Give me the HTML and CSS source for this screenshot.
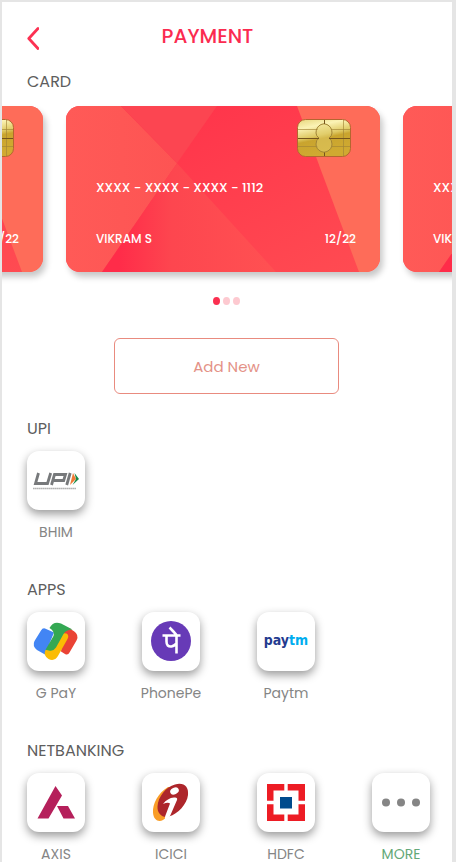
FILE: index.html
```html
<!DOCTYPE html>
<html lang="en">
<head>
<meta charset="utf-8">
<meta name="viewport" content="width=device-width, initial-scale=1">
<title>Payment</title>
<link rel="stylesheet" href="styles.css">
</head>
<body>
<svg class="defs" aria-hidden="true">
  <defs>
    <linearGradient id="g-left" x1="0" y1="0" x2="1" y2="0"><stop offset="0" stop-color="#ff5a57"/><stop offset="1" stop-color="#fd5453"/></linearGradient>
    <linearGradient id="g-bottom" x1="0" y1="0" x2="1" y2="0"><stop offset="0.1" stop-color="#ff2c49"/><stop offset="0.4" stop-color="#fd464f"/><stop offset="1" stop-color="#ff5152"/></linearGradient>
    <linearGradient id="g-right" x1="0" y1="0" x2="1" y2="1"><stop offset="0" stop-color="#ff2f49"/><stop offset="1" stop-color="#ff4c52"/></linearGradient>
    <linearGradient id="g-chip" x1="0" y1="0" x2="0.3" y2="1"><stop offset="0" stop-color="#e6d67c"/><stop offset="0.25" stop-color="#fbf3b5"/><stop offset="0.5" stop-color="#dfc964"/><stop offset="0.6" stop-color="#c9a42e"/><stop offset="1" stop-color="#d0aa31"/></linearGradient>
    <symbol id="card-art" viewBox="0 0 314 165" preserveAspectRatio="none">
      <rect width="314" height="165" fill="url(#g-right)"/>
      <path d="M0 0H55L111 57L36 165H0Z" fill="url(#g-left)"/>
      <path d="M55 0H151L111 57Z" fill="#fc4551"/>
      <path d="M111 57L210 165H36Z" fill="url(#g-bottom)"/>
      <path d="M231 0H314V165H293Z" fill="#fe6c59"/>
    </symbol>
    <symbol id="chip" viewBox="0 0 54 38">
      <rect x=".5" y=".5" width="53" height="37" rx="8" fill="url(#g-chip)" stroke="#b4662f"/>
      <g fill="none" stroke="#a18435" stroke-width="1">
        <path d="M1 10.500H21M34 10.500H53M1 27.500H21M34 27.500H53M46.500 1V37" opacity=".65"/>
        <path d="M24 5.500Q27 4 30 5.500Q35 8 35 14Q35 17 32 19Q35 21 35 25Q35 30 30 32.500Q27 34 24 32.500Q19 30 19 25Q19 21 22 19Q19 17 19 14Q19 8 24 5.500Z" fill="#e4d274" fill-opacity=".45"/>
      </g>
      <path d="M1 19.500H22M32 19.500H53M27.500 1V5M27.500 33.500V37" stroke="#75541c" fill="none"/>
    </symbol>
  </defs>
</svg>
<main class="screen">
  <header class="topbar">
    <button class="back" type="button" aria-label="Back">
      <svg viewBox="0 0 12 23" width="12" height="23"><path d="M11 1.500L1.800 11.500L11 21.500" fill="none" stroke="#fc3152" stroke-width="2.800" stroke-linecap="round" stroke-linejoin="round"/></svg>
    </button>
    <h1 class="title">PAYMENT</h1>
  </header>

  <section>
    <h2 class="heading">CARD</h2>
    <div class="carousel">
      <article class="card">
        <svg class="card-art"><use href="#card-art"/></svg>
        <svg class="chip"><use href="#chip"/></svg>
        <p class="number">XXXX - XXXX - XXXX - 1112</p>
        <p class="owner"><span>VIKRAM S</span><span>12/22</span></p>
      </article>
      <article class="card">
        <svg class="card-art"><use href="#card-art"/></svg>
        <svg class="chip"><use href="#chip"/></svg>
        <p class="number">XXXX - XXXX - XXXX - 1112</p>
        <p class="owner"><span>VIKRAM S</span><span>12/22</span></p>
      </article>
      <article class="card">
        <svg class="card-art"><use href="#card-art"/></svg>
        <svg class="chip"><use href="#chip"/></svg>
        <p class="number">XXXX - XXXX - XXXX - 1112</p>
        <p class="owner"><span>VIKRAM S</span><span>12/22</span></p>
      </article>
    </div>
    <div class="actions">
      <div class="dots"><span class="dot active"></span><span class="dot"></span><span class="dot"></span></div>
      <button class="add" type="button">Add New</button>
    </div>
  </section>

  <section class="group">
    <h2 class="heading">UPI</h2>
    <div class="options">
      <button class="option" type="button">
        <span class="tile"><svg viewBox="0 0 58 59">
          <g fill="none" stroke="#77797b" stroke-width="2.800" stroke-linejoin="miter">
            <path d="M11.500 22L8.500 32.500H20.500L23.700 22"/>
            <path d="M24.500 34L27.500 23.500H38.500L36.700 29.500H27"/>
            <path d="M43.200 22L39.700 34"/>
          </g>
          <path d="M46 22L49 28L43 34Z" fill="#f07a35"/><path d="M47.500 22L52 28L45.500 34L49 28Z" fill="#198a48"/>
          <path d="M6 37.500H49" stroke="#999" stroke-width="1.600" stroke-dasharray="1.700 .3" opacity=".75"/>
        </svg></span>
        <span class="label">BHIM</span>
      </button>
    </div>
  </section>

  <section class="group">
    <h2 class="heading">APPS</h2>
    <div class="options">
      <button class="option" type="button">
        <span class="tile"><svg viewBox="0 0 58 59">
          <path d="M36 18L43 16.800L47 19.200Q52.500 23 49.500 28.500L42.500 40.500Q41 43.500 38 42L34 39.500Z" fill="#ea4335"/>
          <path d="M18 16.500L27 20.500L18 42.500L10 38Q5 34 7.500 29L14 18.500Q15.500 15.800 18 16.500Z" fill="#4285f4"/>
          <path d="M39.500 21.500Q42.500 23.500 40.500 27L31.500 43Q28 50 21.500 47Q16 43.500 18.500 38L24 36L34 21Z" fill="#fbbc04"/>
          <path d="M22.500 16Q26.500 8.500 34 11.500L45.500 17.500Q39 17.500 36.500 22L29 35.500Q26 39.800 22 38.500L18.500 37.800L26.500 24Q28 19.500 22.500 16Z" fill="#34a853"/>
        </svg></span>
        <span class="label">G PaY</span>
      </button>
      <button class="option" type="button">
        <span class="tile"><svg viewBox="0 0 58 59">
          <circle cx="29" cy="29" r="20" fill="#673ab7"/>
          <path d="M20.500 23.500H38.500M24.500 23.500V29.500Q24.500 35 29.500 34.500Q32 34 34.500 31.500M34.500 41.500V23Q32 20 27.500 15.500" fill="none" stroke="#fff" stroke-width="2.600"/>
        </svg></span>
        <span class="label">PhonePe</span>
      </button>
      <button class="option" type="button">
        <span class="tile"><svg viewBox="0 0 58 59">
          <text class="paytm" x="29" y="33" text-anchor="middle"><tspan fill="#243b8f">pay</tspan><tspan fill="#00adef">tm</tspan></text>
        </svg></span>
        <span class="label">Paytm</span>
      </button>
    </div>
  </section>

  <section class="group">
    <h2 class="heading">NETBANKING</h2>
    <div class="options">
      <button class="option" type="button">
        <span class="tile"><svg viewBox="0 0 58 59">
          <path d="M28.500 13L35 22.500L21.500 45.500H10.500ZM30 33H41L48 45.500H36.500Z" fill="#b5205b"/>
        </svg></span>
        <span class="label">AXIS</span>
      </button>
      <button class="option" type="button">
        <span class="tile"><svg viewBox="0 0 58 59">
          <path d="M26 14C16 20 10.500 31 11 39.500C11.500 47 16.500 49.500 21 47C25 45 27.500 40 26 37L35 15Z" fill="#f99d27"/>
          <path d="M27 43.500C21 45.500 15 41 15.500 33.500C16 24 24 13.500 33 11.500C42 9 47 14 46 22C45 31 36 41 27 43.500Z" fill="#ad262b"/>
          <ellipse cx="32.500" cy="18" rx="4.500" ry="3.200" transform="rotate(-25 32.500 18)" fill="#fff"/>
          <path d="M21 31Q25.500 25 32 24.500Q36 24 35 27L28.500 42Q27.500 45 25.500 45.500L23.500 46.500Q22 45.500 24 41L28 30.500Q26 29 21 31Z" fill="#fff"/>
        </svg></span>
        <span class="label">ICICI</span>
      </button>
      <button class="option" type="button">
        <span class="tile"><svg viewBox="0 0 58 59">
          <rect x="10" y="11" width="38" height="37" fill="#ed1c24"/>
          <rect x="16.500" y="17.500" width="25" height="24" fill="#fff"/>
          <path d="M29 11V48M10 29.500H48" stroke="#fff" stroke-width="3.400"/>
          <rect x="23" y="24" width="12" height="11.500" fill="#004b8d"/>
        </svg></span>
        <span class="label">HDFC</span>
      </button>
      <button class="option more" type="button">
        <span class="tile"><svg viewBox="0 0 58 59" fill="#858585"><circle cx="14" cy="29.500" r="4"/><circle cx="29" cy="29.500" r="4"/><circle cx="44" cy="29.500" r="4"/></svg></span>
        <span class="label">MORE</span>
      </button>
    </div>
  </section>
</main>
</body>
</html>
```
FILE: styles.css
```css
* { box-sizing: border-box; }

html, body, h1, h2, p { margin: 0; }

body {
  font-family: Poppins, Inter, "Open Sans", sans-serif;
  background: #e5e5e5;
  height: 100vh;
  overflow: hidden;
}

button {
  font: inherit;
  background: none;
  border: 0;
  padding: 0;
  cursor: pointer;
}

svg { display: block; }

.defs {
  position: absolute;
  width: 0;
  height: 0;
}

.screen {
  margin: 2px 4px 0 2px;
  background: #fff;
  overflow: hidden;
}

.topbar {
  display: flex;
  align-items: center;
  padding: 19px 76px 19px 25px;
}

.title {
  flex: 1;
  text-align: center;
  font-size: 20px;
  line-height: 30px;
  font-weight: 500;
  color: #fb2b50;
}

.back { padding-top: 4px; }

.heading {
  padding-left: 25px;
  font-size: 16px;
  line-height: 24px;
  font-weight: 400;
  color: #5e5e5e;
}

.carousel {
  display: flex;
  justify-content: center;
  gap: 23px;
  padding: 12px 8px 25px 0;
  overflow: hidden;
}

.card {
  position: relative;
  flex: none;
  display: flex;
  flex-direction: column;
  width: 314px;
  height: 166px;
  padding: 13px 24px 23px 30px;
  border-radius: 14px;
  overflow: hidden;
  color: #fff;
  font-size: 12px;
  line-height: 20px;
  font-weight: 500;
  box-shadow: 3px 5px 6px rgba(0, 0, 0, 0.22);
}

.card-art {
  position: absolute;
  inset: 0;
  width: 100%;
  height: 100%;
}

.chip {
  position: relative;
  align-self: flex-end;
  width: 54px;
  height: 38px;
  margin-right: 5px;
}

.number {
  position: relative;
  margin-top: 21px;
  font-size: 13px;
}

.owner {
  position: relative;
  display: flex;
  justify-content: space-between;
  margin-top: auto;
}

.actions { padding-right: 1px; }

.dots {
  display: flex;
  justify-content: center;
  gap: 3px;
}

.dot {
  width: 7px;
  height: 8px;
  border-radius: 50%;
  background: #fdc9d0;
}

.active { background: #fb2f50; }

.add {
  display: block;
  width: 50%;
  height: 56px;
  margin: 33px auto 23px;
  border: 1px solid #e98b7f;
  border-radius: 6px;
  font-size: 15px;
  color: #e49287;
}

.group { padding-bottom: 36px; }

.options {
  display: grid;
  grid-template-columns: repeat(4, 58px);
  justify-content: space-between;
  padding: 10px 22px 0 25px;
}

.option {
  display: flex;
  flex-direction: column;
  align-items: center;
  gap: 12px;
  font-size: 14px;
  line-height: 20px;
  color: #858585;
}

.tile {
  width: 58px;
  height: 59px;
  border-radius: 12px;
  background: #fff;
  box-shadow: 0 4px 10px rgba(0, 0, 0, 0.4);
}

.tile svg {
  width: 58px;
  height: 59px;
}

.more { color: #64a878; }

.paytm {
  font-family: "DejaVu Sans Condensed", "Open Sans", sans-serif;
  font-size: 14px;
  font-weight: 700;
}
```
